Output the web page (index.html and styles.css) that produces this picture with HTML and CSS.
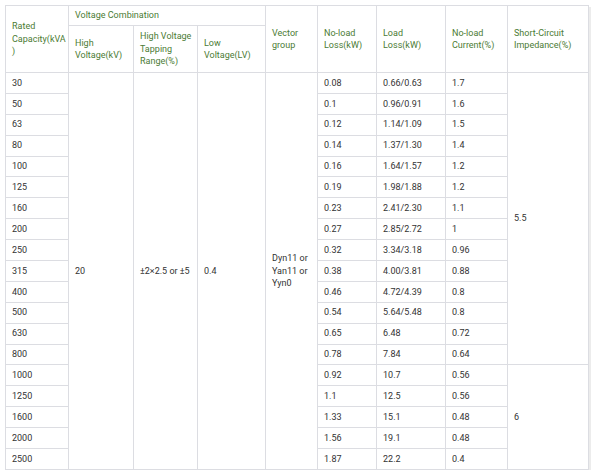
FILE: index.html
```html
<!DOCTYPE html>
<html>
<head>
<meta charset="utf-8">
<link rel="stylesheet" href="styles.css">
</head>
<body>
<div class="wrap">
<table class="spec">
  <colgroup>
    <col class="c1"><col class="c2"><col class="c3"><col class="c4"><col class="c5"><col class="c6"><col class="c7"><col class="c8"><col class="c9">
  </colgroup>
  <thead>
    <tr class="h1">
      <th rowspan="2" class="cap">Rated Capacity(kVA)</th>
      <th colspan="3">Voltage Combination</th>
      <th rowspan="2">Vector group</th>
      <th rowspan="2">No-load Loss(kW)</th>
      <th rowspan="2">Load Loss(kW)</th>
      <th rowspan="2">No-load Current(%)</th>
      <th rowspan="2">Short-Circuit Impedance(%)</th>
    </tr>
    <tr class="h2">
      <th>High Voltage(kV)</th>
      <th>High Voltage Tapping Range(%)</th>
      <th>Low Voltage(LV)</th>
    </tr>
  </thead>
  <tbody>
    <tr><td>30</td><td rowspan="19">20</td><td rowspan="19">±2×2.5 or ±5</td><td rowspan="19">0.4</td><td rowspan="19">Dyn11 or Yan11 or Yyn0</td><td>0.08</td><td>0.66/0.63</td><td>1.7</td><td rowspan="14">5.5</td></tr>
    <tr><td>50</td><td>0.1</td><td>0.96/0.91</td><td>1.6</td></tr>
    <tr><td>63</td><td>0.12</td><td>1.14/1.09</td><td>1.5</td></tr>
    <tr><td>80</td><td>0.14</td><td>1.37/1.30</td><td>1.4</td></tr>
    <tr><td>100</td><td>0.16</td><td>1.64/1.57</td><td>1.2</td></tr>
    <tr><td>125</td><td>0.19</td><td>1.98/1.88</td><td>1.2</td></tr>
    <tr><td>160</td><td>0.23</td><td>2.41/2.30</td><td>1.1</td></tr>
    <tr><td>200</td><td>0.27</td><td>2.85/2.72</td><td>1</td></tr>
    <tr><td>250</td><td>0.32</td><td>3.34/3.18</td><td>0.96</td></tr>
    <tr><td>315</td><td>0.38</td><td>4.00/3.81</td><td>0.88</td></tr>
    <tr><td>400</td><td>0.46</td><td>4.72/4.39</td><td>0.8</td></tr>
    <tr><td>500</td><td>0.54</td><td>5.64/5.48</td><td>0.8</td></tr>
    <tr><td>630</td><td>0.65</td><td>6.48</td><td>0.72</td></tr>
    <tr><td>800</td><td>0.78</td><td>7.84</td><td>0.64</td></tr>
    <tr><td>1000</td><td>0.92</td><td>10.7</td><td>0.56</td><td rowspan="5">6</td></tr>
    <tr><td>1250</td><td>1.1</td><td>12.5</td><td>0.56</td></tr>
    <tr><td>1600</td><td>1.33</td><td>15.1</td><td>0.48</td></tr>
    <tr><td>2000</td><td>1.56</td><td>19.1</td><td>0.48</td></tr>
    <tr><td>2500</td><td>1.87</td><td>22.2</td><td>0.4</td></tr>
  </tbody>
</table>
</div>
</body>
</html>
```
FILE: styles.css
```css
html, body {
  margin: 0;
  padding: 0;
  background: #ffffff;
}
.wrap {
  padding: 5px 0 0 5px;
}
.spec {
  border-collapse: collapse;
  table-layout: fixed;
  width: 583px;
  font-family: Roboto, "Liberation Sans", sans-serif;
  font-size: 9px;
  line-height: 12.5px;
  color: #333333;
  box-shadow: 2px 2px 0 #ececec;
}
.c1 { width: 63px; }
.c2 { width: 65px; }
.c3 { width: 64px; }
.c4 { width: 68px; }
.c5 { width: 52px; }
.c6 { width: 59px; }
.c7 { width: 69px; }
.c8 { width: 62px; }
.c9 { width: 81px; }
.spec th, .spec td {
  border: 1px solid #dcdde2;
  padding: 0 4px 0 6px;
  text-align: left;
  vertical-align: middle;
  font-weight: normal;
}
.spec th {
  color: #4b7b34;
}
.spec th.cap {
  padding-right: 0;
  overflow-wrap: anywhere;
}
.h1 th { height: 19px; }
.h2 th { height: 46px; }
.spec td { height: 19.9px; }
```
